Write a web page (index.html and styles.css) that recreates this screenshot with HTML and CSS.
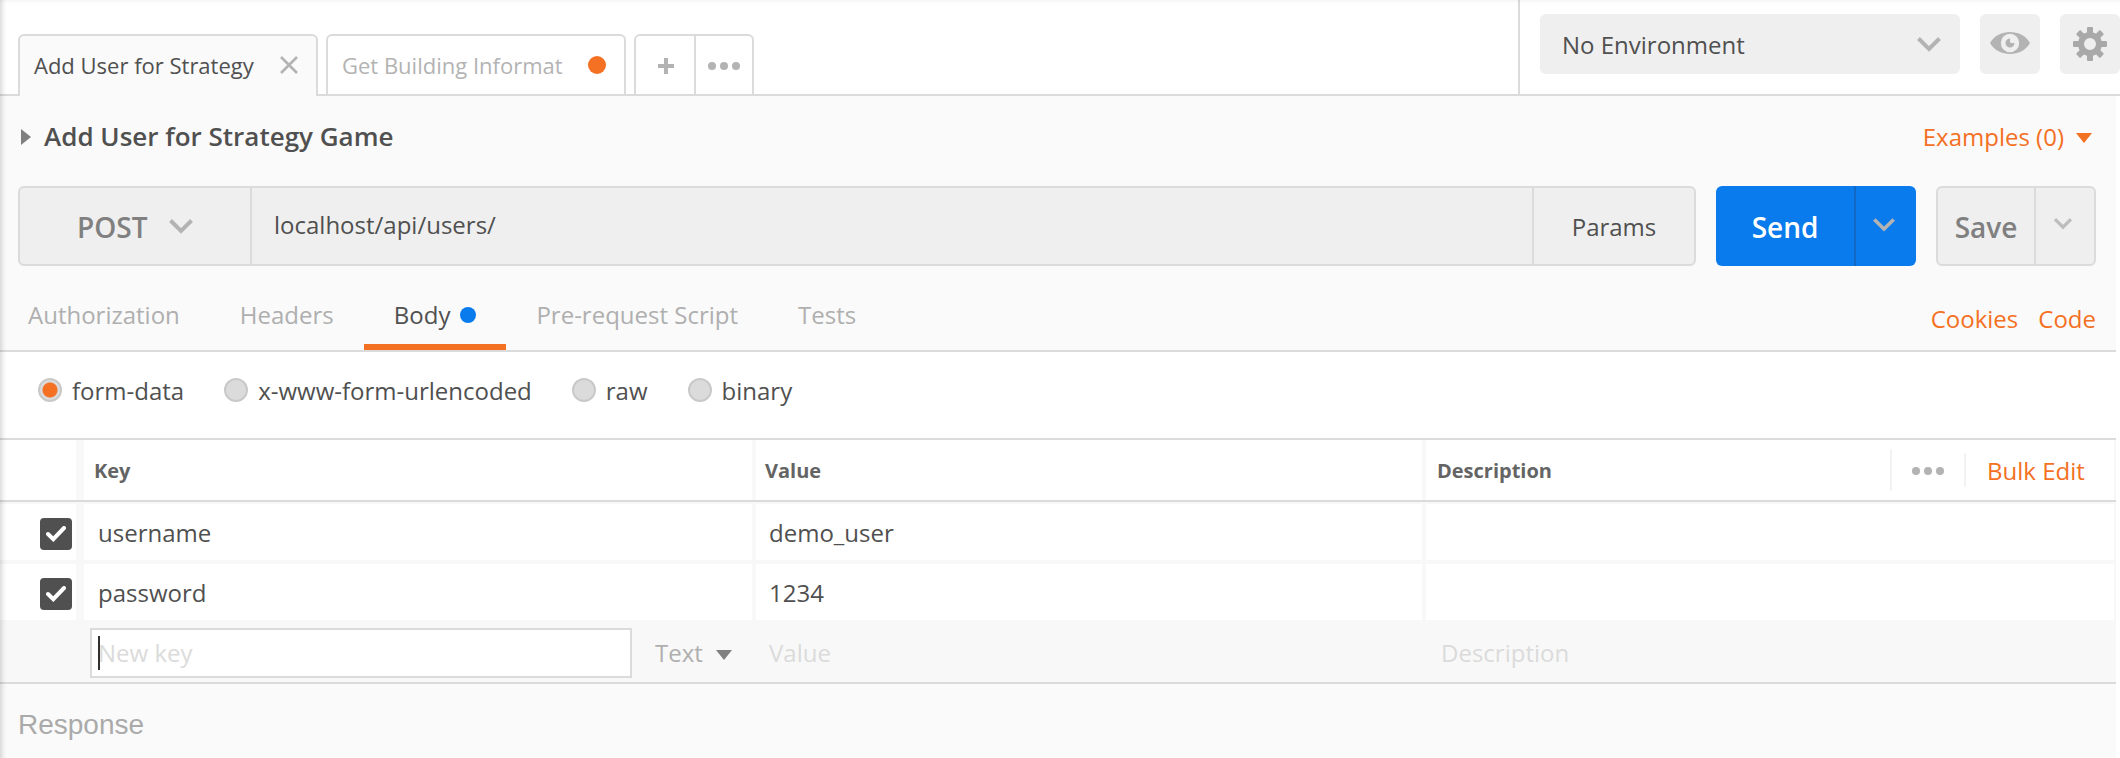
FILE: index.html
```html
<!DOCTYPE html>
<html lang="en">
<head>
<meta charset="utf-8">
<title>Add User for Strategy Game</title>
<link rel="stylesheet" href="styles.css">
</head>
<body>
<div class="app">
  <header class="topbar">
    <div class="tabs">
      <div class="tab tab-active"><span class="tab-label">Add User for Strategy</span>
        <svg class="tab-close" width="18" height="18" viewBox="0 0 18 18"><path d="M1 1L17 17M17 1L1 17" fill="none" stroke="#b3b3b3" stroke-width="2.6"/></svg>
      </div>
      <div class="tab"><span class="tab-label">Get Building Informat</span><span class="unsaved-dot"></span></div>
      <div class="tab-tools">
        <div class="tab-tool"><svg width="16" height="16" viewBox="0 0 16 16"><path d="M8 0V16M0 8H16" stroke="#b3b3b3" stroke-width="4"/></svg></div>
        <div class="tab-tool"><span class="dots"><i></i><i></i><i></i></span></div>
      </div>
    </div>
    <div class="environment">
      <div class="env-select"><span>No Environment</span>
        <svg width="24" height="15" viewBox="0 0 24 15"><path d="M1.5 1.5L12 12L22.500 1.5" fill="none" stroke="#b3b3b3" stroke-width="4"/></svg>
      </div>
      <div class="icon-button">
        <svg width="40" height="24" viewBox="0 0 40 24"><path d="M0 12C8-2.700 32-2.700 40 12C32 26.700 8 26.700 0 12Z" fill="#b3b3b3"/><circle cx="20" cy="12" r="9.200" fill="#efefef"/><path d="M20 7.500A4.500 4.500 0 1 0 24.500 12H21.500A1.500 1.500 0 0 1 20 10.500Z" fill="#b3b3b3"/></svg>
      </div>
      <div class="icon-button gear">
        <svg width="34" height="34" viewBox="-17 -17 34 34"><circle r="9" fill="none" stroke="#a9a9a9" stroke-width="6"/><g fill="#a9a9a9"><rect x="-3" y="-17" width="6" height="8" rx="1"/><rect x="-3" y="9" width="6" height="8" rx="1"/><rect x="-17" y="-3" width="8" height="6" rx="1"/><rect x="9" y="-3" width="8" height="6" rx="1"/><g transform="rotate(45)"><rect x="-3" y="-17" width="6" height="8" rx="1"/><rect x="-3" y="9" width="6" height="8" rx="1"/><rect x="-17" y="-3" width="8" height="6" rx="1"/><rect x="9" y="-3" width="8" height="6" rx="1"/></g></g></svg>
      </div>
    </div>
  </header>

  <main class="request">
    <div class="title-row">
      <svg class="disclosure" width="10" height="16" viewBox="0 0 10 16"><path d="M0 0L10 8L0 16Z" fill="#808080"/></svg>
      <h1 class="title">Add User for Strategy Game</h1>
      <a class="link examples">Examples (0)</a>
      <svg class="examples-arrow" width="16" height="10" viewBox="0 0 16 10"><path d="M0 0H16L8 10Z" fill="#f47023"/></svg>
    </div>

    <div class="url-row">
      <div class="url-box">
        <div class="method"><span>POST</span>
          <svg width="24" height="15" viewBox="0 0 24 15"><path d="M1.500 1.500L12 12L22.500 1.500" fill="none" stroke="#b3b3b3" stroke-width="4"/></svg>
        </div>
        <div class="url">localhost/api/users/</div>
        <div class="params">Params</div>
      </div>
      <div class="send">
        <div class="send-label">Send</div>
        <div class="send-more"><svg width="22" height="14" viewBox="0 0 22 14"><path d="M1.300 1.500L11 11L20.700 1.500" fill="none" stroke="#b3b3b3" stroke-width="3.600"/></svg></div>
      </div>
      <div class="save">
        <div class="save-label">Save</div>
        <div class="save-more"><svg width="18" height="12" viewBox="0 0 18 12"><path d="M1 1.200L9 9.200L17 1.200" fill="none" stroke="#bdbdbd" stroke-width="3.200"/></svg></div>
      </div>
    </div>

    <nav class="sections">
      <div class="section">Authorization</div>
      <div class="section">Headers</div>
      <div class="section section-active">Body<span class="body-dot"></span></div>
      <div class="section">Pre-request Script</div>
      <div class="section">Tests</div>
      <div class="section-links"><a class="link">Cookies</a><a class="link">Code</a></div>
    </nav>

    <div class="body-types">
      <div class="option"><span class="radio radio-on"></span>form-data</div>
      <div class="option"><span class="radio"></span>x-www-form-urlencoded</div>
      <div class="option"><span class="radio"></span>raw</div>
      <div class="option"><span class="radio"></span>binary</div>
    </div>

    <div class="table">
      <div class="row head">
        <div class="cell cell-check"></div>
        <div class="cell">Key</div>
        <div class="cell">Value</div>
        <div class="cell cell-tools">
          <span class="head-label">Description</span>
          <span class="head-more"><span class="dots"><i></i><i></i><i></i></span></span>
          <span class="bulk"><a class="link">Bulk Edit</a></span>
        </div>
      </div>
      <div class="row">
        <div class="cell cell-check"><span class="check"><svg width="20" height="16" viewBox="0 0 20 16"><path d="M2 8L7.300 13.200L18 2" fill="none" stroke="#fff" stroke-width="4" stroke-linecap="round"/></svg></span></div>
        <div class="cell">username</div>
        <div class="cell cell-value">demo_user</div>
        <div class="cell"></div>
      </div>
      <div class="row">
        <div class="cell cell-check"><span class="check"><svg width="20" height="16" viewBox="0 0 20 16"><path d="M2 8L7.300 13.200L18 2" fill="none" stroke="#fff" stroke-width="4" stroke-linecap="round"/></svg></span></div>
        <div class="cell">password</div>
        <div class="cell cell-value">1234</div>
        <div class="cell"></div>
      </div>
      <div class="row new-row">
        <div></div>
        <div class="new-key-cell">
          <div class="new-key"><span class="caret"></span><span>New key</span></div>
          <span class="type">Text</span>
          <svg class="type-arrow" width="16" height="10" viewBox="0 0 16 10"><path d="M0 0H16L8 10Z" fill="#808080"/></svg>
        </div>
        <div class="placeholder">Value</div>
        <div class="placeholder">Description</div>
      </div>
    </div>

    <div class="response">Response</div>
  </main>
</div>
</body>
</html>
```
FILE: styles.css
```css
* { box-sizing: border-box; }
body {
  margin: 0;
  background: #fff;
  color: #505050;
  font-family: "Open Sans", "Noto Sans", sans-serif;
  font-size: 24px;
}
svg { display: block; flex: none; }
.app {
  position: relative;
  width: 2120px;
  height: 758px;
  overflow: hidden;
  display: flex;
  flex-direction: column;
}
/* soft window edge along the left and top */
.app::before {
  content: "";
  position: absolute;
  inset: 0;
  z-index: 2;
  pointer-events: none;
  background:
    linear-gradient(to right, rgba(0,0,0,.13), rgba(0,0,0,.03) 4px, transparent 7px),
    linear-gradient(to bottom, rgba(0,0,0,.04), transparent 4px);
}
.link { color: #f47023; }

.topbar { height: 96px; display: flex; border-bottom: 2px solid #dbdbdb; flex: none; }
.tabs { width: 1518px; padding: 34px 0 0 18px; display: flex; gap: 8px; }
.tab {
  width: 300px;
  height: 60px;
  padding: 0 18px 1px 14px;
  display: flex;
  align-items: center;
  border: 2px solid #dbdbdb;
  border-bottom: 0;
  border-radius: 6px 6px 0 0;
  font-size: 22px;
  color: #b3b3b3;
}
.tab-active { height: 62px; padding-bottom: 3px; background: #fafafa; color: #505050; }
.tab-label { flex: 1; white-space: nowrap; }
.unsaved-dot { width: 18px; height: 18px; border-radius: 50%; background: #f47023; }
.tab-tools {
  width: 120px;
  height: 60px;
  display: grid;
  grid-template-columns: 58px 1fr;
  border: 2px solid #dbdbdb;
  border-bottom: 0;
  border-radius: 6px 6px 0 0;
}
.tab-tool { display: flex; align-items: center; justify-content: center; padding: 2px 0 0 2px; }
.tab-tool + .tab-tool { padding-left: 0; border-left: 2px solid #dbdbdb; }
.dots { display: flex; gap: 4px; }
.dots i { width: 8px; height: 8px; border-radius: 50%; background: #b3b3b3; }

.environment { flex: 1; padding: 14px 0 0 20px; display: flex; gap: 20px; border-left: 2px solid #dbdbdb; }
.env-select {
  width: 420px;
  height: 60px;
  padding: 0 19px 0 22px;
  display: flex;
  align-items: center;
  justify-content: space-between;
  border-radius: 6px;
  background: #efefef;
}
.icon-button {
  width: 60px;
  height: 60px;
  padding-bottom: 2px;
  display: flex;
  align-items: center;
  justify-content: center;
  border-radius: 6px;
  background: #efefef;
}
.gear { padding-bottom: 0; }

.request { width: 2116px; flex: 1; background: #fafafa; display: flex; flex-direction: column; }
.title-row { height: 90px; padding: 0 24px 9px 21px; display: flex; align-items: center; }
.title { margin: 0 0 2px 13px; flex: 1; font-size: 26px; font-weight: 600; }
.examples { margin: 0 12px 1px 0; }
.examples-arrow { margin-top: 3px; }

.url-row { height: 80px; padding: 0 20px 0 18px; display: flex; gap: 20px; }
.url-box {
  width: 1678px;
  display: grid;
  grid-template-columns: 230px 1fr 160px;
  border: 2px solid #dbdbdb;
  border-radius: 6px;
  background: #efefef;
}
.url-box > div { display: flex; align-items: center; }
.method { padding-left: 57px; gap: 22px; font-size: 28px; font-weight: 600; color: #808080; }
.method span { padding-top: 2px; }
.url-box .url { padding: 0 0 3px 22px; border-left: 2px solid #dbdbdb; border-right: 2px solid #dbdbdb; }
.params { justify-content: center; }
.send, .save { display: grid; border-radius: 6px; font-size: 28px; font-weight: 600; }
.send > div, .save > div { display: flex; align-items: center; justify-content: center; }
.send .send-label, .save .save-label { padding-top: 2px; }
.send { width: 200px; grid-template-columns: 138px 62px; background: #097bed; color: #fff; }
.send .send-more { padding: 0 4px 2px 0; border-left: 2px solid #1269c4; }
.save {
  width: 160px;
  grid-template-columns: 96px 1fr;
  border: 2px solid #dbdbdb;
  background: #efefef;
  color: #808080;
}
.save .save-more { padding: 0 4px 5px 0; border-left: 2px solid #dbdbdb; }

.sections { height: 86px; padding: 14px 20px 0 0; display: flex; border-bottom: 2px solid #dbdbdb; }
.section {
  padding: 4px 30px 0;
  display: flex;
  align-items: center;
  border-bottom: 6px solid transparent;
  color: #afafaf;
  white-space: nowrap;
}
.section:first-child { padding-left: 28px; }
.section-active { border-color: #f47023; color: #505050; }
.body-dot { width: 16px; height: 16px; margin: 2px 0 0 10px; border-radius: 50%; background: #097bed; }
.section-links { margin-left: auto; padding-top: 6px; display: flex; align-items: center; gap: 20px; }

.body-types { height: 86px; padding: 0 0 10px 38px; display: flex; align-items: center; gap: 40px; background: #fff; }
.option { display: flex; align-items: center; gap: 10px; }
.radio { width: 24px; height: 24px; border: 2px solid #c9c9c9; border-radius: 50%; background: #dbdbdb; }
.radio-on { background: radial-gradient(circle, #f47023 7px, #dbdbdb 8px); }

.table { border-top: 2px solid #dbdbdb; border-bottom: 2px solid #dbdbdb; background: #f8f8f8; }
.row {
  display: grid;
  grid-template-columns: 80px 668px 666px 688px;
  column-gap: 4px;
  height: 56px;
  margin-bottom: 4px;
}
.cell { display: flex; align-items: center; padding-left: 14px; background: #fff; }
.cell-value { padding-left: 13px; }
.cell-check { width: 76px; padding: 4px 0 0 40px; }
.head { height: 62px; margin-bottom: 2px; border-bottom: 2px solid #dbdbdb; font-size: 20px; font-weight: 700; color: #646464; }
.head .cell { padding-left: 10px; }
.head .cell:nth-child(3) { padding-left: 9px; }
.head .cell-tools { padding-left: 11px; }
.head-label { flex: 1; }
.head-more { width: 74px; height: 42px; display: flex; align-items: center; justify-content: center; border-left: 2px solid #f2f2f2; padding: 2px 0 0; }
.bulk { width: 150px; height: 34px; display: flex; align-items: center; padding-left: 21px; border-left: 2px solid #f2f2f2; font-size: 24px; font-weight: 400; }
.check {
  width: 32px;
  height: 32px;
  padding-bottom: 1px;
  display: flex;
  align-items: center;
  justify-content: center;
  border-radius: 4px;
  background: #505050;
}
.new-row { height: 62px; margin: -4px 0 0; }
.new-row > div { display: flex; align-items: center; padding: 2px 0 0 13px; }
.new-row > .placeholder:last-child { padding-left: 15px; }
.new-row .new-key-cell { padding: 4px 0 0 6px; color: #afafaf; }
.new-key {
  width: 542px;
  height: 50px;
  display: flex;
  align-items: center;
  padding-left: 6px;
  border: 2px solid #dbdbdb;
  background: #fff;
  color: #dbdbdb;
}
.new-key > span:last-child, .type { padding-bottom: 2px; }
.caret { width: 2px; height: 34px; margin-right: -2px; background: #303030; z-index: 1; }
.type { margin: 0 13px 0 23px; }
.type-arrow { margin-top: 4px; }
.placeholder { color: #dbdbdb; }

.response { padding: 25px 0 0 18px; font-family: "Liberation Sans", Arial, sans-serif; font-size: 28px; line-height: 32px; color: #aaa; }
```
